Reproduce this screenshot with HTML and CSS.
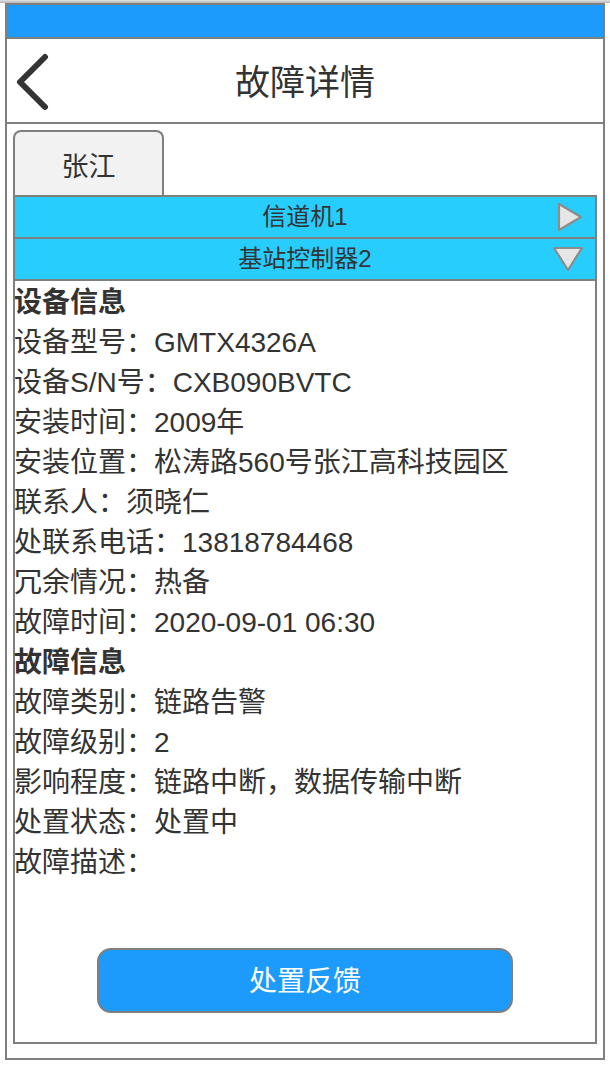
FILE: index.html
```html
<!DOCTYPE html>
<html lang="zh">
<head>
<meta charset="utf-8">
<link rel="stylesheet" href="styles.css">
<title>故障详情</title>
</head>
<body>
<div class="topstrip"></div>
<div class="phone">
  <div class="statusbar"></div>
  <header class="navbar">
    <svg class="back" width="36" height="58" viewBox="0 0 36 58">
      <polyline points="30,4 5,29 30,54" fill="none" stroke="#333" stroke-width="6" stroke-linecap="round" stroke-linejoin="round"/>
    </svg>
    <h1 class="title">故障详情</h1>
    <span></span>
  </header>
  <main class="content">
    <div class="tabs"><div class="tab">张江</div></div>
    <section class="panel">
      <div class="acc-row">
        <span class="acc-label">信道机1</span>
        <svg class="acc-icon" width="28" height="32" viewBox="0 0 28 32">
          <polygon points="3,3 25,16 3,29" fill="#e6e6e6" stroke="#8c8c8c" stroke-width="2.2" stroke-linejoin="round"/>
        </svg>
      </div>
      <div class="acc-row">
        <span class="acc-label">基站控制器2</span>
        <svg class="acc-icon" width="34" height="28" viewBox="0 0 34 28">
          <polygon points="3,3 31,3 17,25" fill="#e6e6e6" stroke="#8c8c8c" stroke-width="2.2" stroke-linejoin="round"/>
        </svg>
      </div>
      <div class="info">
        <p class="heading">设备信息</p>
        <p>设备型号：GMTX4326A</p>
        <p>设备S/N号：CXB090BVTC</p>
        <p>安装时间：2009年</p>
        <p>安装位置：松涛路560号张江高科技园区</p>
        <p>联系人：须晓仁</p>
        <p>处联系电话：13818784468</p>
        <p>冗余情况：热备</p>
        <p>故障时间：2020-09-01 06:30</p>
        <p class="heading">故障信息</p>
        <p>故障类别：链路告警</p>
        <p>故障级别：2</p>
        <p>影响程度：链路中断，数据传输中断</p>
        <p>处置状态：处置中</p>
        <p>故障描述：</p>
      </div>
      <div class="actions">
        <button class="btn">处置反馈</button>
      </div>
    </section>
  </main>
</div>
</body>
</html>
```

FILE: styles.css
```css
* { box-sizing: border-box; }
html, body { margin: 0; padding: 0; background: #fff; }
body {
  font-family: "Liberation Sans", "Noto Sans CJK SC", sans-serif;
  color: #333;
  width: 610px;
}
.topstrip {
  height: 3px;
  background: linear-gradient(#e2e2e2, #b5b5b5);
}
.phone {
  margin: 0 5px;
  width: 600px;
  border: 2px solid #7f7f7f;
  padding-bottom: 14px;
}
.statusbar {
  height: 32px;
  background: #1c9bfc;
}
.navbar {
  height: 87px;
  border-top: 2px solid #7f7f7f;
  border-bottom: 2px solid #7f7f7f;
  display: grid;
  grid-template-columns: 1fr auto 1fr;
  align-items: center;
  padding-left: 8px;
}
.back { display: block; margin-top: 2px; }
.title {
  margin: 0;
  font-size: 35px;
  font-weight: normal;
  line-height: 40px;
  color: #333;
  margin-right: 8px;
  padding-top: 5px;
}
.content {
  padding: 6px 6px 0;
}
.tabs { display: flex; }
.tab {
  width: 151px;
  height: 65px;
  border: 2px solid #7f7f7f;
  border-bottom: none;
  border-radius: 8px 8px 0 0;
  background: #f2f2f2;
  display: flex;
  align-items: center;
  justify-content: center;
  font-size: 27px;
  padding-top: 1px;
}
.panel {
  border: 2px solid #7f7f7f;
  height: 849px;
  display: flex;
  flex-direction: column;
}
.acc-row {
  height: 42px;
  background: #26cdfd;
  border-bottom: 2px solid #7f7f7f;
  display: flex;
  align-items: center;
  justify-content: center;
  position: relative;
  font-size: 24px;
}
.acc-label { line-height: 40px; }
.acc-icon {
  position: absolute;
  right: 10px;
  top: 50%;
  transform: translateY(-50%);
  filter: blur(0.4px);
}
.acc-row:first-child .acc-icon { right: 11px; }
.info { padding-top: 2px; margin-left: -1px; }
.info p {
  margin: 0;
  font-size: 28px;
  line-height: 40px;
  white-space: nowrap;
}
.info .heading { font-weight: bold; }
.actions {
  display: flex;
  justify-content: center;
  margin-top: 65px;
}
.btn {
  width: 416px;
  height: 65px;
  background: #1c9bfc;
  border: 2px solid #7f7f7f;
  border-radius: 14px;
  color: #fff;
  font-family: inherit;
  font-size: 28px;
  padding: 0 0 3px;
}
```
